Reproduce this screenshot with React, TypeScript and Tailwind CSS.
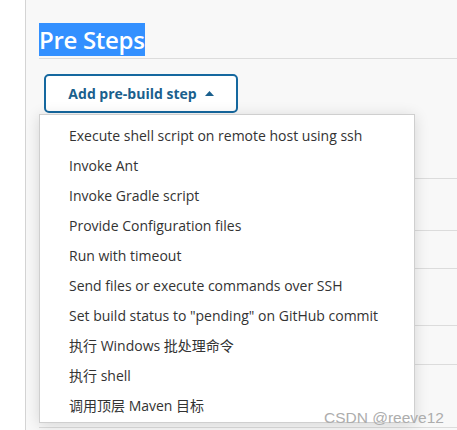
import React from "react"

const steps = [
  "Execute shell script on remote host using ssh",
  "Invoke Ant",
  "Invoke Gradle script",
  "Provide Configuration files",
  "Run with timeout",
  "Send files or execute commands over SSH",
  'Set build status to "pending" on GitHub commit',
  "执行 Windows 批处理命令",
  "执行 shell",
  "调用顶层 Maven 目标",
]

// rows of the form that sit behind the open menu
const rowHeights = [66, 52, 38, 57, 39, 63]

const App = () => {
  return (
    <div
      className="relative w-[457px] h-[430px] overflow-hidden bg-white flex"
      style={{ fontFamily: '"Open Sans", "Noto Sans CJK SC", sans-serif' }}
    >
      {/* left gutter */}
      <div className="w-[26px] shrink-0 bg-white border-r border-[#d4d4d4]" />

      {/* main section */}
      <div className="flex-1 bg-[#f8f8f8] pl-[13px]">
        <div className="pt-[23px]">
          <h2 className="inline-block h-[33px] bg-[#3390ff] text-white text-[24px] font-semibold leading-[33px] tracking-[-0.3px]">
            Pre Steps
          </h2>
        </div>
        <div className="mt-[2px] border-t border-[#dcdcdc]" />

        <div className="relative pt-[15px]">
          <button className="ml-[5px] w-[194px] h-[39px] rounded-[5px] border-2 border-[#15689f] bg-white flex items-center justify-center gap-[8px] text-[14px] font-bold text-[#1a5f8d]">
            <span>Add pre-build step</span>
            <svg width="9" height="5" viewBox="0 0 9 5" className="mb-[1px]">
              <path d="M0 5 L4.5 0 L9 5 Z" fill="#1a5f8d" />
            </svg>
          </button>

          {/* rows behind the menu */}
          <div className="flex flex-col">
            {rowHeights.map((h, i) => (
              <div key={i} className="border-b border-[#dcdcdc]" style={{ height: h }} />
            ))}
          </div>

          {/* open dropdown */}
          <div className="absolute left-0 top-[55px] w-[376px] h-[309px] bg-white border border-[#cfcfcf] shadow-[0_2px_14px_rgba(0,0,0,0.14)] pt-[5px]">
            {steps.map((s) => (
              <div
                key={s}
                className="h-[30px] pl-[29px] flex items-center text-[14px] text-[#333] whitespace-nowrap"
              >
                {s}
              </div>
            ))}
          </div>
        </div>
      </div>

      {/* watermark */}
      <div
        className="absolute left-[324px] top-[406px] text-[15.5px] text-[#adadad]"
        style={{ fontFamily: '"Liberation Sans", Arial, sans-serif' }}
      >
        CSDN @reeve12
      </div>
    </div>
  )
}

export default App
